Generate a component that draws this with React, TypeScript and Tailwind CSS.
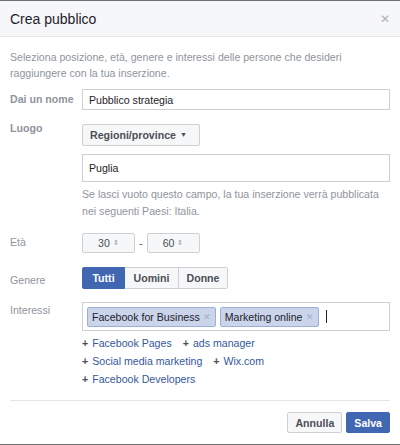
import React from "react";

const suggestions: string[][] = [
  ["Facebook Pages", "ads manager"],
  ["Social media marketing", "Wix.com"],
  ["Facebook Developers"],
];

function Suggestion({ label }: { label: string }) {
  return (
    <span className="mr-[11px] whitespace-nowrap">
      <span className="mr-[4px] font-bold text-[#4b4f56]">+</span>
      <span className="text-[#365899]">{label}</span>
    </span>
  );
}

function Token({ label }: { label: string }) {
  return (
    <span className="flex h-[20px] items-center rounded-[2px] border border-[#9cb0d6] bg-[#cad5ec] pl-[4px] pr-[4px] text-[#1d2129]">
      {label}
      <span className="ml-[3px] text-[9px] text-[#a3adc2]">✕</span>
    </span>
  );
}

export default function App() {
  return (
    <div
      className="h-[445px] w-[400px] border-y border-[#707070] bg-white text-[10.6px] leading-[16px] text-[#1d2129]"
      style={{ fontFamily: '"Liberation Sans", Arial, sans-serif' }}
    >
      {/* Header */}
      <div className="flex h-[36px] items-center justify-between border-b border-[#e5e5e5] bg-[#f6f7f9] pl-[10px] pr-[10px]">
        <span className="text-[14px] text-[#1d2129]">Crea pubblico</span>
        <span className="text-[12px] text-[#b0b3b8]">✕</span>
      </div>

      <div className="px-[10px] pt-[12px]">
        <p className="text-[#90949c]">
          Seleziona posizione, età, genere e interessi delle persone che desideri
          <br />
          raggiungere con la tua inserzione.
        </p>

        {/* Nome */}
        <div className="mt-[8px] flex">
          <div className="w-[72px] pt-[2px] font-bold text-[#90949c]">Dai un nome</div>
          <div className="flex h-[21px] flex-1 items-center border border-[#ced0d4] pl-[6px]">Pubblico strategia</div>
        </div>

        {/* Luogo */}
        <div className="mt-[14px] flex">
          <div className="-mt-[4px] w-[72px] font-bold text-[#90949c]">Luogo</div>
          <div className="flex-1">
            <div className="flex h-[22px] w-[118px] items-center rounded-[2px] border border-[#ced0d4] bg-[#f6f7f9] pl-[7px] font-bold text-[#4b4f56]">
              Regioni/province
              <span className="ml-[4px] text-[7px] text-[#4b4f56]">▼</span>
            </div>
            <div className="mt-[8px] flex h-[28px] items-center border border-[#ced0d4] pl-[6px]">Puglia</div>
            <p className="mt-[4px] pr-[4px] leading-[17px] text-[#90949c]">
              Se lasci vuoto questo campo, la tua inserzione verrà pubblicata
              <br />
              nei seguenti Paesi: Italia.
            </p>
          </div>
        </div>

        {/* Età */}
        <div className="mt-[13px] flex">
          <div className="w-[72px] pt-[1px] text-[#90949c]">Età</div>
          <div className="flex items-center">
            <div className="flex h-[20px] w-[53px] items-center justify-center rounded-[2px] border border-[#ced0d4] bg-[#f6f7f9] text-[#4b4f56]">
              30<span className="ml-[3px] text-[7px] text-[#90949c]">⇕</span>
            </div>
            <span className="mx-[4px] text-[#4b4f56]">-</span>
            <div className="flex h-[20px] w-[53px] items-center justify-center rounded-[2px] border border-[#ced0d4] bg-[#f6f7f9] text-[#4b4f56]">
              60<span className="ml-[3px] text-[7px] text-[#90949c]">⇕</span>
            </div>
          </div>
        </div>

        {/* Genere */}
        <div className="mt-[14px] flex">
          <div className="w-[72px] pt-[5px] text-[#90949c]">Genere</div>
          <div className="flex h-[22px]">
            <div className="flex w-[43px] items-center justify-center rounded-l-[2px] border border-[#4267b2] bg-[#4267b2] font-bold text-white">
              Tutti
            </div>
            <div className="flex w-[54px] items-center justify-center border-y border-r border-[#ced0d4] bg-[#f6f7f9] font-bold text-[#4b4f56]">
              Uomini
            </div>
            <div className="flex w-[49px] items-center justify-center rounded-r-[2px] border-y border-r border-[#ced0d4] bg-[#f6f7f9] font-bold text-[#4b4f56]">
              Donne
            </div>
          </div>
        </div>

        {/* Interessi */}
        <div className="mt-[13px] flex">
          <div className="w-[72px] text-[#90949c]">Interessi</div>
          <div className="flex-1">
            <div className="flex h-[29px] items-center gap-[4px] border border-[#ced0d4] pl-[4px]">
              <Token label="Facebook for Business" />
              <Token label="Marketing online" />
              <span className="ml-[3px] h-[13px] w-px bg-[#1d2129]" />
            </div>
            <div className="mt-[3px] leading-[18px]">
              {suggestions.map((row, i) => (
                <div key={i} className="flex">
                  {row.map((s) => (
                    <Suggestion key={s} label={s} />
                  ))}
                </div>
              ))}
            </div>
          </div>
        </div>

        {/* Footer */}
        <div className="mt-[12px] flex justify-end gap-[4px] border-t border-[#e5e5e5] pt-[11px]">
          <button className="h-[21px] rounded-[2px] border border-[#ced0d4] bg-[#f6f7f9] px-[7px] font-bold text-[#4b4f56]">
            Annulla
          </button>
          <button className="h-[21px] rounded-[2px] border border-[#4267b2] bg-[#4267b2] px-[7px] font-bold text-white">
            Salva
          </button>
        </div>
      </div>
    </div>
  );
}
